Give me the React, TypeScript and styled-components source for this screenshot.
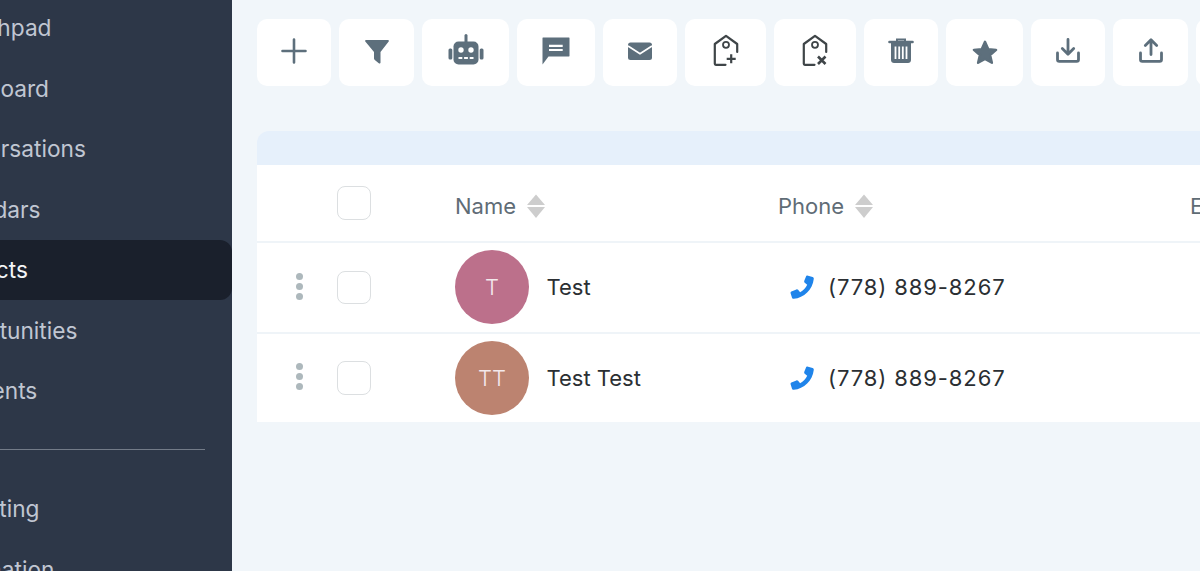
import React from 'react';
import styled, { createGlobalStyle } from 'styled-components';

const Global = createGlobalStyle`
  html, body {
    margin: 0;
    height: 100%;
    overflow: hidden;
    font-family: Inter, "Noto Sans", sans-serif;
    background: #f1f6fa;
  }
  #root { height: 100%; }
`;

const Shell = styled.div`
  display: flex;
  height: 571px;
  overflow: hidden;
`;

const Sidebar = styled.aside`
  flex: 0 0 232px;
  background: #2d3748;
  overflow: hidden;
`;

const NavList = styled.nav`
  display: flex;
  flex-flow: column nowrap;
  margin-top: -2.5px;
`;

const NavItem = styled.div<{ $active?: boolean }>`
  flex: 0 0 60.5px;
  display: flex;
  align-items: center;
  border-radius: 0 12px 12px 0;
  font-size: 22.7px;
  white-space: nowrap;
  color: ${(p) => (p.$active ? '#f4f6f8' : '#c0c6d2')};
  background: ${(p) => (p.$active ? '#1a202c' : 'transparent')};
  & > span {
    margin-left: -68px;
  }
`;

const NavDivider = styled.hr`
  width: 232px;
  margin: 27.5px 0 29px -27px;
  border: 0;
  height: 1px;
  background: #737b88;
`;

const Main = styled.main`
  flex: 1;
  min-width: 0;
  overflow: hidden;
  padding: 19px 0 0 25px;
`;

const Toolbar = styled.div`
  display: flex;
  gap: 8px;
  width: 1100px;
`;

const ToolButton = styled.button<{ $w: number }>`
  flex: 0 0 ${(p) => p.$w}px;
  height: 67px;
  padding: 0 0 4px;
  display: flex;
  align-items: center;
  justify-content: center;
  border: 0;
  border-radius: 10px;
  background: #fff;
`;

const Glyph = styled.svg.attrs({ viewBox: '0 0 36 36', width: 36, height: 36 })`
  display: block;
  flex: none;
  overflow: visible;
`;

const Table = styled.section`
  width: 1100px;
  margin-top: 45px;
`;

const TableBanner = styled.div`
  height: 34px;
  background: #e6f0fb;
  border-radius: 12px 0 0 0;
`;

const Row = styled.div<{ $h: number }>`
  display: grid;
  grid-template-columns: 80px 118px 323px 1fr;
  align-items: center;
  height: ${(p) => p.$h}px;
  background: #fff;
  border-bottom: 2px solid #eff4f8;
  &:last-child {
    border-bottom: 0;
  }
`;

const HeaderCells = styled.div`
  display: grid;
  grid-template-columns: 412px 1fr;
  align-items: center;
`;

const HeadLabel = styled.div`
  display: flex;
  align-items: center;
  gap: 11px;
  padding-top: 6px;
  font-size: 22px;
  color: #5f6c76;
`;

const Handle = styled.div`
  display: flex;
  flex-flow: column nowrap;
  align-items: center;
  gap: 3px;
  margin-bottom: 2px;
  padding-left: 4px;
  & > i {
    width: 7px;
    height: 7px;
    border-radius: 50%;
    background: #adb8bc;
  }
`;

const Check = styled.div`
  width: 33.5px;
  height: 33.5px;
  box-sizing: border-box;
  border: 1.5px solid #dcdfe1;
  border-radius: 8px;
  background: #fff;
`;

const NameCell = styled.div`
  display: flex;
  align-items: center;
  gap: 17.5px;
  font-size: 22px;
  color: #2b2f33;
`;

const Avatar = styled.div<{ $bg: string }>`
  width: 74px;
  height: 74px;
  display: flex;
  align-items: center;
  justify-content: center;
  border-radius: 50%;
  background: ${(p) => p.$bg};
  color: #f3e9ec;
  font-size: 22px;
  font-weight: 300;
`;

const PhoneCell = styled.div`
  display: flex;
  align-items: center;
  gap: 14px;
  padding-left: 12px;
  font-size: 22px;
  letter-spacing: 0.9px;
  color: #2b2f33;
`;

const slate = '#5d6f7c';
const ink = '#3f4548';

const SortArrows = () => (
  <svg width="18" height="24" viewBox="0 0 18 24" fill="#cdcdcd">
    <path d="M9 0.5 18 11H0z" />
    <path d="M0 13h18L9 24z" />
  </svg>
);

const PhoneIcon = () => (
  <svg width="24" height="24" viewBox="0 0 24 24" fill="#1f84ea">
    <path d="M17.2.6 22.6 2c.8.2 1.3 1 1.2 1.700C22.6 14.800 14 22.800 3.800 23.800c-.9.1-1.600-.4-1.800-1.100L.6 18.200c-.2-.7.1-1.400.8-1.700l5-2.100c.6-.3 1.300-.1 1.700.4l2 2.400c3.300-1.600 5.600-4.100 7.100-7.400l-2.500-2c-.5-.4-.7-1.100-.5-1.700L16 1.400c.2-.6.700-.9 1.200-.8z" />
  </svg>
);

const TagOutline = () => (
  <>
    <path d="M17.500 31.800H7.800c-.6 0-1-.4-1-1V11L18 2.800 29.200 11v8" fill="none" stroke={ink} strokeWidth="2.200" strokeLinejoin="round" strokeLinecap="round" />
    <circle cx="18" cy="11.800" r="3" fill="none" stroke={ink} strokeWidth="1.800" />
  </>
);

const tools: { w: number; icon?: React.ReactNode }[] = [
  {
    w: 74,
    icon: <path d="M18 6.500v23M6.500 18h23" stroke={slate} strokeWidth="2.600" strokeLinecap="round" fill="none" />,
  },
  {
    w: 75,
    icon: (
      <path
        fill={slate}
        d="M7 7h22c.8 0 1.200.9.700 1.500L21.500 19v10.500c0 .9-1 1.300-1.700.8l-4-3.400c-.4-.3-.8-.8-.8-1.400V19L6.300 8.500C5.800 7.900 6.200 7 7 7z"
      />
    ),
  },
  {
    w: 87,
    icon: (
      <>
        <path d="M18 2.500v7" stroke={slate} strokeWidth="3" strokeLinecap="round" />
        <rect x="5.500" y="8.500" width="25" height="23" rx="5" fill={slate} />
        <rect x="0.500" y="15.500" width="3.800" height="11" rx="1.500" fill={slate} />
        <rect x="31.700" y="15.500" width="3.800" height="11" rx="1.500" fill={slate} />
        <circle cx="13" cy="17" r="2.700" fill="#fff" />
        <circle cx="23" cy="17" r="2.700" fill="#fff" />
        <path d="M10.500 25h15" stroke="#fff" strokeWidth="1.800" strokeDasharray="3.800 1.800" />
      </>
    ),
  },
  {
    w: 78,
    icon: (
      <>
        <path fill={slate} d="M5 4.500h26c.3 0 .5.2.5.5v18c0 .3-.2.5-.5.5H10.500l-6 8V5c0-.3.200-.5.500-.5z" />
        <path d="M11 12.800h13.700M11 17h13.700" stroke="#fff" strokeWidth="2.200" />
      </>
    ),
  },
  {
    w: 74,
    icon: (
      <>
        <rect x="6" y="9.500" width="24" height="17.500" rx="2.500" fill={slate} />
        <path d="M6 13l12 7.800L30 13" fill="none" stroke="#fff" strokeWidth="1.800" />
      </>
    ),
  },
  {
    w: 81,
    icon: (
      <>
        <TagOutline />
        <path d="M23.200 21.300v9M18.700 25.800h9" stroke={ink} strokeWidth="2.200" fill="none" />
      </>
    ),
  },
  {
    w: 82,
    icon: (
      <>
        <TagOutline />
        <path d="M21 23.500l7.500 7.500M28.500 23.500L21 31" stroke={ink} strokeWidth="2.600" fill="none" />
      </>
    ),
  },
  {
    w: 74,
    icon: (
      <>
        <path d="M6.500 9h23" stroke={slate} strokeWidth="2.600" strokeLinecap="round" />
        <path d="M14 8V6.500h8V8" stroke={slate} strokeWidth="2" fill="none" />
        <path fill={slate} d="M8 10h20v17c0 1.700-1.300 3-3 3H11c-1.700 0-3-1.300-3-3z" />
        <path d="M12.500 13.500v12.500M16.200 13.500v12.500M19.800 13.500v12.500M23.500 13.500v12.500" stroke="#fff" strokeWidth="1.800" />
      </>
    ),
  },
  {
    w: 77,
    icon: (
      <path
        fill={slate}
        stroke={slate}
        strokeWidth="2.400"
        strokeLinejoin="round"
        d="M18 8.800l3.200 7.300 7.900.8-6 5.200 1.800 7.700L18 26l-6.900 3.800 1.800-7.700-6-5.200 7.900-.8z"
      />
    ),
  },
  {
    w: 74,
    icon: (
      <>
        <path d="M7.500 20v6.500c0 1 .6 1.800 1.800 1.800h17.400c1.200 0 1.800-.8 1.800-1.800V20" fill="none" stroke={slate} strokeWidth="2.800" strokeLinecap="round" />
        <path d="M18 6.500v14.500M12.300 15.500L18 21.200l5.700-5.700" fill="none" stroke={slate} strokeWidth="2.800" strokeLinecap="round" strokeLinejoin="round" />
      </>
    ),
  },
  {
    w: 75,
    icon: (
      <>
        <path d="M7.500 20v6.500c0 1 .6 1.800 1.800 1.800h17.400c1.200 0 1.800-.8 1.800-1.800V20" fill="none" stroke={slate} strokeWidth="2.800" strokeLinecap="round" />
        <path d="M18 21.500V7M12.300 12.500L18 6.800l5.700 5.700" fill="none" stroke={slate} strokeWidth="2.800" strokeLinecap="round" strokeLinejoin="round" />
      </>
    ),
  },
  { w: 74 },
];

const navTop = ['Launchpad', 'Dashboard', 'Conversations', 'Calendars', 'Contacts', 'Opportunities', 'Payments'];
const navBottom = ['Marketing', 'Automation'];

const contacts = [
  { initials: 'T', name: 'Test', color: '#bc708b', phone: '(778) 889-8267' },
  { initials: 'TT', name: 'Test Test', color: '#bc8370', phone: '(778) 889-8267' },
];

export default function App() {
  return (
    <Shell>
      <Global />
      <Sidebar>
        <NavList>
          {navTop.map((item) => (
            <NavItem key={item} $active={item === 'Contacts'}>
              <span>{item}</span>
            </NavItem>
          ))}
          <NavDivider />
          {navBottom.map((item) => (
            <NavItem key={item}>
              <span>{item}</span>
            </NavItem>
          ))}
        </NavList>
      </Sidebar>
      <Main>
        <Toolbar>
          {tools.map((tool, i) => (
            <ToolButton key={i} $w={tool.w}>
              {tool.icon && <Glyph>{tool.icon}</Glyph>}
            </ToolButton>
          ))}
        </Toolbar>
        <Table>
          <TableBanner />
          <Row $h={76}>
            <span />
            <Check />
            <HeadLabel>
              Name
              <SortArrows />
            </HeadLabel>
            <HeaderCells>
              <HeadLabel>
                Phone
                <SortArrows />
              </HeadLabel>
              <HeadLabel>Email</HeadLabel>
            </HeaderCells>
          </Row>
          {contacts.map((c) => (
            <Row key={c.name} $h={88.5}>
              <Handle>
                <i />
                <i />
                <i />
              </Handle>
              <Check />
              <NameCell>
                <Avatar $bg={c.color}>{c.initials}</Avatar>
                {c.name}
              </NameCell>
              <PhoneCell>
                <PhoneIcon />
                {c.phone}
              </PhoneCell>
            </Row>
          ))}
        </Table>
      </Main>
    </Shell>
  );
}
